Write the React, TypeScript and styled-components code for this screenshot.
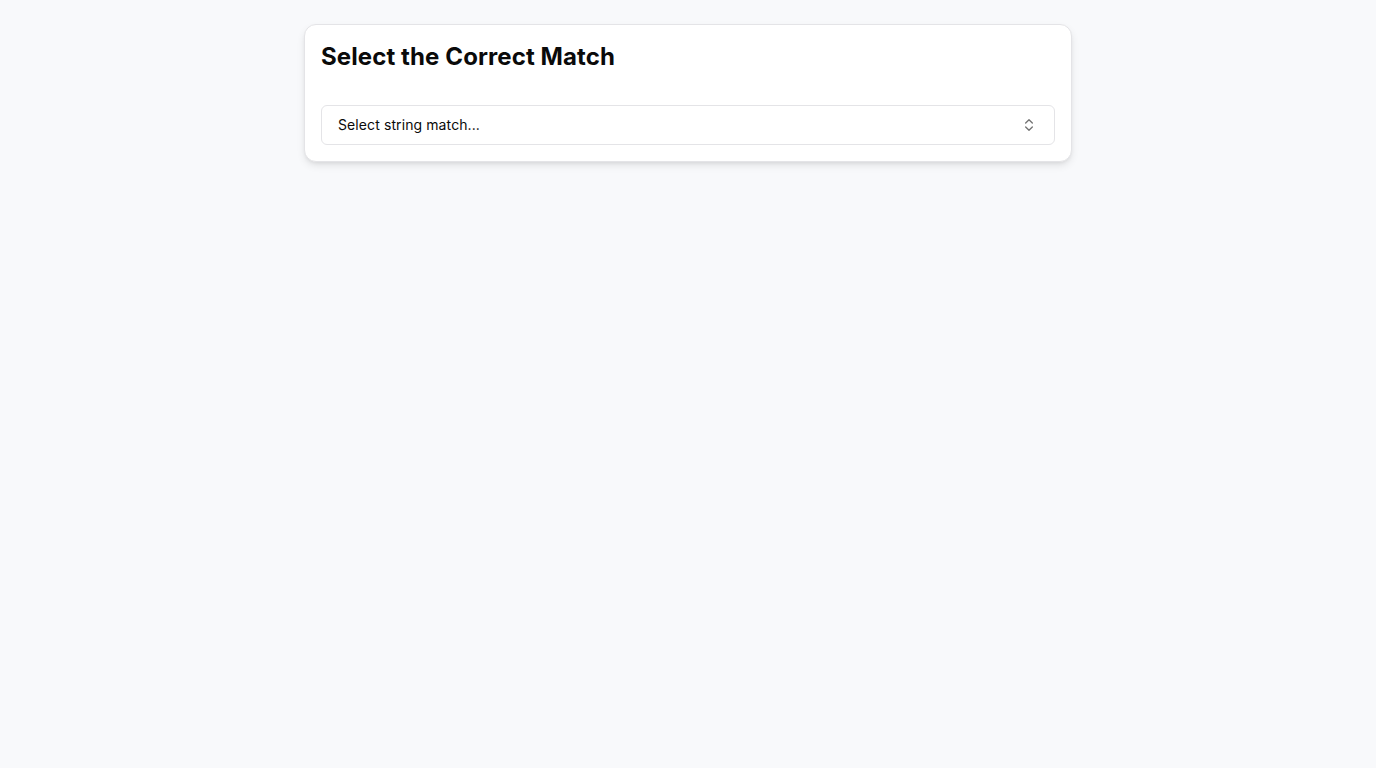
import React from "react";
import styled, { createGlobalStyle } from "styled-components";

const Global = createGlobalStyle`
  html, body { margin: 0; padding: 0; background: #f8f9fb; }
  body { font-family: Inter, "Noto Sans", sans-serif; color: #0a0a0a; }
  * { box-sizing: border-box; }
`;

const Page = styled.main`
  padding: 24px 16px;
  display: flex;
  justify-content: center;
`;

const Card = styled.section`
  width: 768px;
  background: #ffffff;
  border: 1px solid #e4e4e7;
  border-radius: 12px;
  padding: 16px;
  box-shadow: 0 4px 8px -1px rgba(0,0,0,0.1), 0 2px 4px -2px rgba(0,0,0,0.1);
`;

const Title = styled.h2`
  margin: 0 0 32px;
  font-size: 24px;
  line-height: 32px;
  font-weight: 700;
  letter-spacing: 0.1px;
`;

const SelectButton = styled.button`
  width: 100%;
  height: 40px;
  display: flex;
  align-items: center;
  justify-content: space-between;
  padding: 0 17px 1px 16px;
  background: #ffffff;
  border: 1px solid #e4e4e7;
  border-radius: 6px;
  font-family: inherit;
  font-size: 14px;
  letter-spacing: 0.1px;
  color: #0a0a0a;
  cursor: pointer;
`;

const Icon = styled.svg`
  width: 16px;
  height: 16px;
  color: #737373;
`;

export default function App() {
  return (
    <>
      <Global />
      <Page>
        <Card>
          <Title>Select the Correct Match</Title>
          <SelectButton type="button">
            <span>Select string match...</span>
            <Icon viewBox="0 0 24 24" fill="none" stroke="currentColor" strokeWidth={2} strokeLinecap="round" strokeLinejoin="round">
              <path d="m7 15 5 5 5-5" />
              <path d="m7 9 5-5 5 5" />
            </Icon>
          </SelectButton>
        </Card>
      </Page>
    </>
  );
}
